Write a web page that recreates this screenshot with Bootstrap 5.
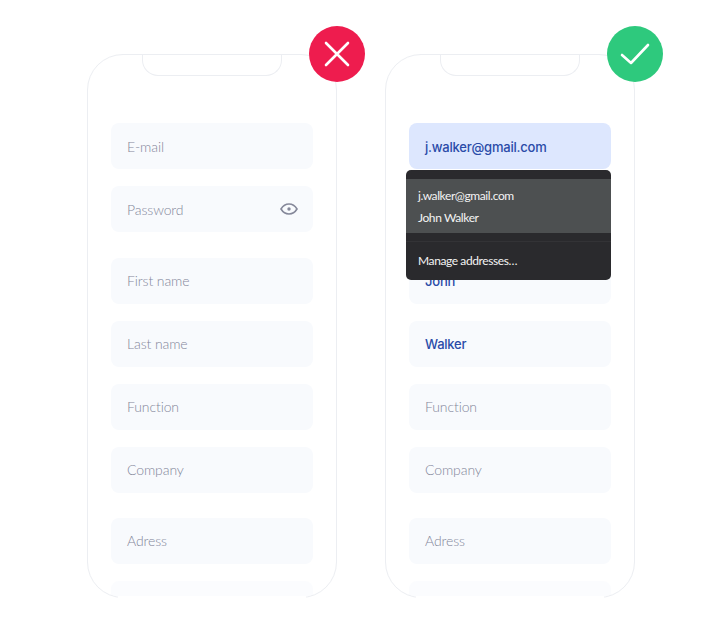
<!DOCTYPE html>
<html lang="en">
<head>
  <meta charset="UTF-8">
  <title>Form autofill</title>
  <meta name="viewport" content="width=device-width, initial-scale=1">
  <link href="https://cdn.jsdelivr.net/npm/bootstrap@5.3.0/dist/css/bootstrap.min.css" rel="stylesheet">
  <style>
    body {
      background: #fff;
      font-family: "Lato", "Liberation Sans", sans-serif;
    }
    .compare-wrap {
      padding: 54px 0 0 87px;
      gap: 48px;
    }
    .phone-frame {
      position: relative;
      width: 250px;
      height: 544px;
      border: 1px solid #eceef2;
      border-radius: 36px;
    }
    /* the phone fades out at the bottom, no flat line there */
    .phone-frame::after {
      content: "";
      position: absolute;
      left: 30px;
      right: 30px;
      bottom: -1px;
      height: 2px;
      background: #fff;
    }
    .phone-inner {
      height: 542px;
      overflow: hidden;
      border-radius: 35px;
      padding: 0 23px;
    }
    .phone-notch {
      width: 140px;
      height: 22px;
      margin: -1px auto 47px;
      border: 1px solid #eceef2;
      border-top: 0;
      border-radius: 0 0 16px 16px;
    }
    .phone-field {
      flex: 0 0 46px;
      height: 46px;
      padding: 0 16px;
      border-radius: 8px;
      background: #f8fafd;
      color: #83869a;
      font-size: 14px;
      font-weight: 300;
      letter-spacing: -.1px;
    }
    .field-stack + .field-stack .phone-field {
      padding-bottom: 2px;
    }
    .field-stack .phone-field.is-filled {
      padding-top: 3px;
      padding-bottom: 0;
      color: #2a4ba8;
      font-family: "Inter", "Liberation Sans", sans-serif;
      font-size: 13px;
      font-weight: 500;
      letter-spacing: -.22px;
    }
    .field-stack + .field-stack .phone-field.is-filled {
      padding-top: 1px;
    }
    .phone-field.is-active {
      background: #dde7fe;
    }
    .phone-field.is-cut {
      opacity: .6;
    }
    .field-eye {
      margin-right: -1px;
    }
    .field-stack {
      gap: 17px;
    }
    .field-stack + .field-stack {
      margin-top: 26px;
    }
    .field-stack + .field-stack + .field-stack {
      margin-top: 25px;
    }
    .status-badge {
      position: absolute;
      top: -29px;
      right: -29px;
      width: 56px;
      height: 56px;
      border-radius: 50%;
    }
    .status-no {
      background: #ee1c4e;
    }
    .status-yes {
      background: #2ec97d;
    }
    .autofill-menu {
      position: absolute;
      top: 115px;
      left: 20px;
      width: 205px;
      height: 110px;
      padding-top: 9px;
      border-radius: 5px;
      background: #2a2a2d;
      color: #f4f4f4;
      font-size: 12px;
      letter-spacing: -.4px;
    }
    .autofill-current {
      height: 54px;
      padding: 2px 12px 0;
      background: #4d5051;
      gap: 4px;
    }
    .autofill-manage {
      margin-top: 8px;
      padding: 10px 12px 0;
      border-top: 1px solid #333336;
    }
  </style>
</head>
<body>
  <div class="d-flex compare-wrap">

    <!-- wrong version -->
    <div class="phone-frame">
      <div class="phone-inner">
        <div class="phone-notch"></div>
        <div class="d-flex flex-column field-stack">
          <div class="phone-field d-flex align-items-center">E-mail</div>
          <div class="phone-field d-flex align-items-center justify-content-between">
            Password
            <svg class="field-eye" width="18" height="12" viewBox="0 0 18 12" fill="none" stroke="#85889a" stroke-width="1.6">
              <path d="M1 6c2-3.300 4.800-5 8-5s6 1.700 8 5c-2 3.300-4.800 5-8 5S3 9.300 1 6z"/>
              <circle cx="9" cy="6" r="1.700" fill="#85889a" stroke="none"/>
            </svg>
          </div>
        </div>
        <div class="d-flex flex-column field-stack">
          <div class="phone-field d-flex align-items-center">First name</div>
          <div class="phone-field d-flex align-items-center">Last name</div>
          <div class="phone-field d-flex align-items-center">Function</div>
          <div class="phone-field d-flex align-items-center">Company</div>
        </div>
        <div class="d-flex flex-column field-stack">
          <div class="phone-field d-flex align-items-center">Adress</div>
          <div class="phone-field is-cut"></div>
        </div>
      </div>
      <div class="status-badge status-no d-flex align-items-center justify-content-center">
        <svg width="26" height="26" viewBox="0 0 26 26" fill="none" stroke="#fff" stroke-width="2.600" stroke-linecap="round">
          <path d="M2 2l22 22M24 2L2 24"/>
        </svg>
      </div>
    </div>

    <!-- right version -->
    <div class="phone-frame">
      <div class="phone-inner">
        <div class="phone-notch"></div>
        <div class="d-flex flex-column field-stack">
          <div class="phone-field is-filled is-active d-flex align-items-center">j.walker@gmail.com</div>
          <div class="phone-field"></div>
        </div>
        <div class="d-flex flex-column field-stack">
          <div class="phone-field is-filled d-flex align-items-center">John</div>
          <div class="phone-field is-filled d-flex align-items-center">Walker</div>
          <div class="phone-field d-flex align-items-center">Function</div>
          <div class="phone-field d-flex align-items-center">Company</div>
        </div>
        <div class="d-flex flex-column field-stack">
          <div class="phone-field d-flex align-items-center">Adress</div>
          <div class="phone-field is-cut"></div>
        </div>
      </div>
      <div class="autofill-menu">
        <div class="autofill-current d-flex flex-column justify-content-center">
          <div>j.walker@gmail.com</div>
          <div>John Walker</div>
        </div>
        <div class="autofill-manage">Manage addresses…</div>
      </div>
      <div class="status-badge status-yes d-flex align-items-center justify-content-center">
        <svg width="30" height="22" viewBox="0 0 30 22" fill="none" stroke="#fff" stroke-width="2.600" stroke-linecap="round" stroke-linejoin="round">
          <path d="M2 12l9 8L28 2"/>
        </svg>
      </div>
    </div>

  </div>
  <script src="https://cdn.jsdelivr.net/npm/bootstrap@5.3.0/dist/js/bootstrap.bundle.min.js"></script>
</body>
</html>
